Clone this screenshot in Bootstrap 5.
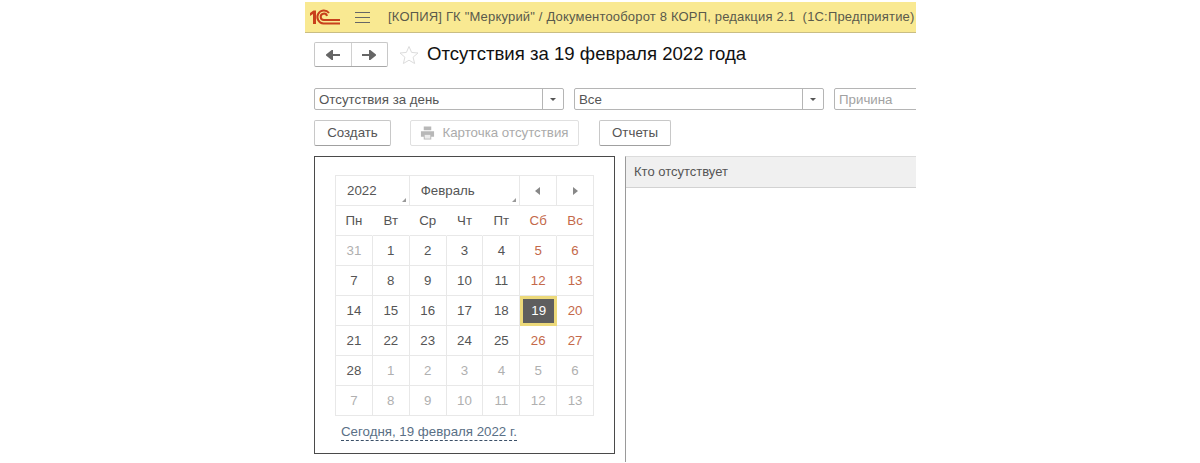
<!DOCTYPE html>
<html lang="ru">
<head>
  <meta charset="UTF-8">
  <title>Отсутствия за 19 февраля 2022 года</title>
  <link href="https://cdn.jsdelivr.net/npm/bootstrap@5.3.0/dist/css/bootstrap.min.css" rel="stylesheet">
  <style>
    body { background: #fff; font-family: "Liberation Sans", Arial, sans-serif; font-size: 13.3px; color: #555; }
    .app-shell { width: 611px; height: 463px; margin-left: 305px; overflow: hidden; padding-top: 2px; }
    .title-bar { height: 31px; background: #f9e992; border-bottom: 1px solid #c9bd84; padding-left: 4px; white-space: nowrap; }
    .title-text { margin-left: 18px; font-size: 13px; color: #5a5a4c; letter-spacing: .18px; }
    .burger { width: 15px; height: 11px; margin-left: 14px; border-top: 1px solid #666; border-bottom: 1px solid #666; position: relative; }
    .burger::after { content: ""; position: absolute; left: 0; right: 0; top: 4px; border-top: 1px solid #666; }
    .form-head { height: 55px; padding: 9px 0 0 9px; }
    .nav-pair { width: 74px; height: 25px; border: 1px solid #c8c8c8; border-bottom-color: #a8a8a8; border-radius: 2px; }
    .nav-pair > div { flex: 1; }
    .nav-pair > div + div { border-left: 1px solid #d0d0d0; }
    .page-title { font-size: 18.6px; font-weight: 400; color: #111; margin: 0 0 0 8px; line-height: 24px; }
    .star-ico { margin-left: 11px; margin-top: 3px; }
    .filter-row { height: 22px; padding-left: 9px; gap: 10px; }
    .combo { height: 22px; width: 250px; flex: none; border: 1px solid #b5b5b5; border-radius: 2px; padding-left: 4px; line-height: 22px; font-size: 13.3px; color: #555; }
    .combo-text { flex: 1; }
    .combo-arrow { width: 21px; height: 20px; border-left: 1px solid #b5b5b5; }
    .combo-arrow::before { content: ""; border: 3px solid transparent; border-top: 3px solid #555; border-bottom: 0; }
    .combo-hint { color: #a2a2a2; }
    .command-row { height: 26px; margin-top: 10px; padding-left: 9px; }
    .cmd-btn { height: 26px; padding: 0; font-size: 13.3px; color: #555; background: #fff; border: 1px solid #c8c8c8; border-bottom-color: #a0a0a0; border-radius: 2px; }
    .cmd-create { width: 77px; }
    .cmd-card { width: 169px; margin-left: 19px; color: #ababab; border-color: #e0e0e0; gap: 7px; }
    .cmd-reports { width: 72px; margin-left: 20px; }
    .work-area { margin-top: 10px; padding-left: 9px; }
    .cal-frame { width: 301px; height: 298px; flex: none; border: 1px solid #4a4a4a; padding: 18px 20px 0; }
    .cal-grid { width: 259px; display: grid; grid-template-columns: repeat(7, 1fr); grid-auto-rows: 30px; border-top: 1px solid #e8e8e8; border-left: 1px solid #e8e8e8; }
    .cal-grid > div { display: flex; align-items: center; justify-content: center; padding-top: 1px; border-right: 1px solid #e8e8e8; border-bottom: 1px solid #e8e8e8; font-size: 13.3px; color: #555; position: relative; }
    .cal-grid .span-year { grid-column: span 2; justify-content: flex-start; padding-left: 11px; }
    .cal-grid .span-month { grid-column: span 3; justify-content: flex-start; padding-left: 11px; }
    .span-year::after, .span-month::after { content: ""; position: absolute; right: 3px; bottom: 3px; border-left: 4px solid transparent; border-bottom: 4px solid #999; }
    .cal-grid .cal-head { border-right-color: transparent; }
    .cal-grid .cal-off { color: #b0b0b0; }
    .cal-grid .cal-rest { color: #c4694a; }
    .cal-grid .cal-today { background: #5e5e5e; color: #fff; box-shadow: inset 0 0 0 1px #ecd97a; border: 2px solid #ecd97a; padding-top: 0; }
    .today-link { display: inline-block; margin: 8px 0 0 6px; font-size: 13.3px; line-height: 16px; color: #5a7086; border-bottom: 1px dashed #3b5068; }
    .right-panel { margin-left: 10px; width: 300px; height: 306px; flex: none; border-left: 1px solid #9a9a9a; border-top: 1px solid #dcdcdc; }
    .right-head { height: 31px; line-height: 30px; padding-left: 8px; background: #f0f0f0; border-bottom: 1px solid #d2d2d2; font-size: 13px; color: #555; }
  </style>
</head>
<body>
  <div class="app-shell">
    <div class="title-bar d-flex align-items-center">
      <svg width="32" height="17" viewBox="0 0 32 17">
        <path d="M1 4 L4.5 1.5 H7 V15 H4 V5 L1 7 Z" fill="#c8401c"/>
        <path d="M20 4 A6.5 6.5 0 1 0 14.5 14.5 H31" fill="none" stroke="#c8401c" stroke-width="2"/>
        <path d="M18 7 A3.2 3.2 0 1 0 15 11 H31" fill="none" stroke="#c8401c" stroke-width="2"/>
      </svg>
      <div class="burger"></div>
      <div class="title-text">[КОПИЯ] ГК "Меркурий" / Документооборот 8 КОРП, редакция 2.1&nbsp; (1С:Предприятие)</div>
    </div>
    <div class="form-head d-flex align-items-start">
      <div class="nav-pair d-flex">
        <div class="d-flex align-items-center justify-content-center">
          <svg width="14" height="10" viewBox="0 0 14 10"><path d="M14 5 H5 M6 1 L1 5 L6 9 Z" fill="#666" stroke="#666" stroke-width="2"/></svg>
        </div>
        <div class="d-flex align-items-center justify-content-center">
          <svg width="14" height="10" viewBox="0 0 14 10"><path d="M0 5 H9 M8 1 L13 5 L8 9 Z" fill="#666" stroke="#666" stroke-width="2"/></svg>
        </div>
      </div>
      <svg class="star-ico" width="20" height="20" viewBox="0 0 20 20"><path d="M10 1.5 L12.6 7.4 L19 8 L14.1 12.2 L15.6 18.5 L10 15.2 L4.4 18.5 L5.9 12.2 L1 8 L7.4 7.4 Z" fill="#fff" stroke="#dcdcdc"/></svg>
      <h1 class="page-title">Отсутствия за 19 февраля 2022 года</h1>
    </div>
    <div class="filter-row d-flex">
      <div class="combo d-flex"><span class="combo-text">Отсутствия за день</span><span class="combo-arrow d-flex align-items-center justify-content-center"></span></div>
      <div class="combo d-flex"><span class="combo-text">Все</span><span class="combo-arrow d-flex align-items-center justify-content-center"></span></div>
      <div class="combo d-flex"><span class="combo-text combo-hint">Причина</span></div>
    </div>
    <div class="command-row d-flex">
      <button class="cmd-btn cmd-create" type="button">Создать</button>
      <button class="cmd-btn cmd-card d-flex align-items-center justify-content-center" type="button">
        <svg width="15" height="14" viewBox="0 0 16 14"><path d="M4 0 H12 V4 H4 Z M1 5 H15 V11 H12 V14 H4 V11 H1 Z" fill="#b8b8b8"/><path d="M5 9 H11 V13 H5 Z" fill="#ececec"/></svg>
        Карточка отсутствия
      </button>
      <button class="cmd-btn cmd-reports" type="button">Отчеты</button>
    </div>
    <div class="work-area d-flex">
      <div class="cal-frame">
        <div class="cal-grid">
          <div class="span-year">2022</div><div class="span-month">Февраль</div>
          <div><svg width="6" height="8" viewBox="0 0 6 8"><path d="M5 0 V8 L0 4 Z" fill="#888"/></svg></div>
          <div><svg width="6" height="8" viewBox="0 0 6 8"><path d="M1 0 V8 L6 4 Z" fill="#888"/></svg></div>

          <div class="cal-head">Пн</div><div class="cal-head">Вт</div><div class="cal-head">Ср</div><div class="cal-head">Чт</div><div class="cal-head">Пт</div><div class="cal-head cal-rest">Сб</div><div class="cal-rest">Вс</div>

          <div class="cal-off">31</div><div>1</div><div>2</div><div>3</div><div>4</div><div class="cal-rest">5</div><div class="cal-rest">6</div>
          <div>7</div><div>8</div><div>9</div><div>10</div><div>11</div><div class="cal-rest">12</div><div class="cal-rest">13</div>
          <div>14</div><div>15</div><div>16</div><div>17</div><div>18</div><div class="cal-today">19</div><div class="cal-rest">20</div>
          <div>21</div><div>22</div><div>23</div><div>24</div><div>25</div><div class="cal-rest">26</div><div class="cal-rest">27</div>
          <div>28</div><div class="cal-off">1</div><div class="cal-off">2</div><div class="cal-off">3</div><div class="cal-off">4</div><div class="cal-off">5</div><div class="cal-off">6</div>
          <div class="cal-off">7</div><div class="cal-off">8</div><div class="cal-off">9</div><div class="cal-off">10</div><div class="cal-off">11</div><div class="cal-off">12</div><div class="cal-off">13</div>
        </div>
        <a class="today-link text-decoration-none" href="#">Сегодня, 19 февраля 2022 г.</a>
      </div>
      <div class="right-panel">
        <div class="right-head">Кто отсутствует</div>
      </div>
    </div>
  </div>
  <script src="https://cdn.jsdelivr.net/npm/bootstrap@5.3.0/dist/js/bootstrap.bundle.min.js"></script>
</body>
</html>
